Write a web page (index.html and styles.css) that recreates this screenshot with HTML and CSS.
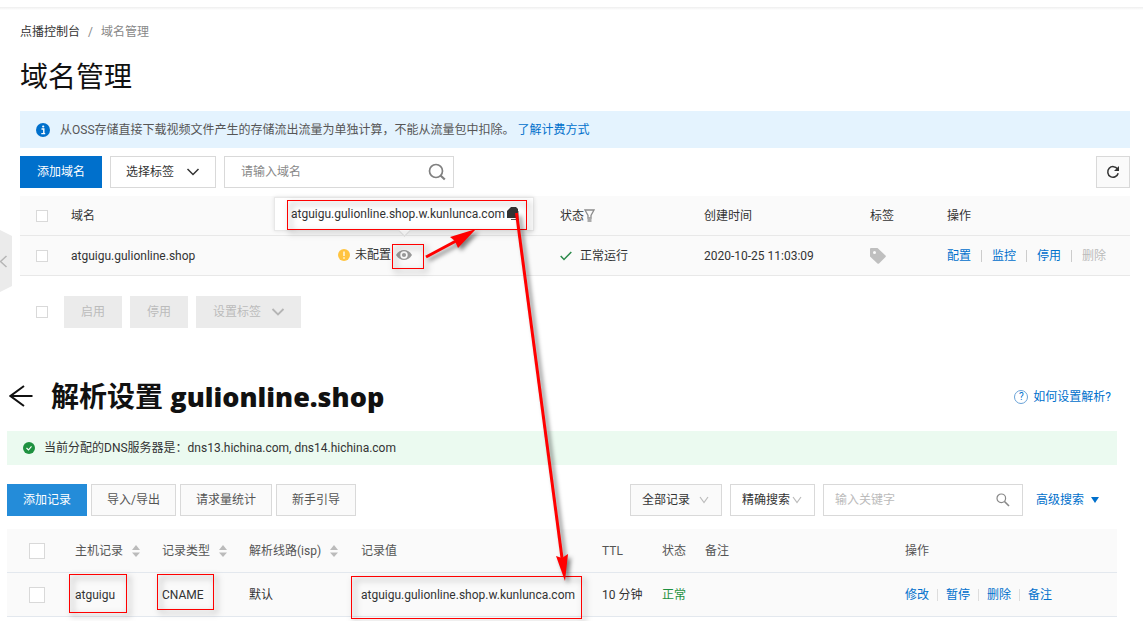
FILE: index.html
```html
<!DOCTYPE html>
<html lang="zh-CN">
<head>
<meta charset="utf-8">
<title>域名管理</title>
<link rel="stylesheet" href="styles.css">
</head>
<body>
<div class="topline"></div>
<button class="collapse" type="button" aria-label="收起菜单">
  <svg width="12" height="62" viewBox="0 0 12 62"><path d="M0 0L12 6V56L0 62Z" fill="#ebebeb"/><path d="M6.500 26L0.500 31.500L6.500 37" fill="none" stroke="#b5b5b5" stroke-width="1.500"/></svg>
</button>

<main>
<section class="domains">
  <nav class="crumbs"><a href="#">点播控制台</a><span class="slash">/</span><span>域名管理</span></nav>
  <h1 class="title">域名管理</h1>
  <div class="notice info">
    <svg width="14" height="14" viewBox="0 0 14 14"><circle cx="7" cy="7" r="7" fill="#0070cc"/><path d="M5.500 6H7.800V10.500M5.300 10.600H9.200" fill="none" stroke="#fff" stroke-width="1.400"/><circle cx="7.200" cy="3.500" r="1.100" fill="#fff"/></svg>
    <p>从OSS存储直接下载视频文件产生的存储流出流量为单独计算，不能从流量包中扣除。 <a href="#">了解计费方式</a></p>
  </div>
  <div class="toolbar">
    <button class="btn primary" type="button">添加域名</button>
    <div class="pick tag-pick">
      <select aria-label="选择标签"><option>选择标签</option></select>
      <svg width="14" height="8" viewBox="0 0 14 8"><path d="M1.500 1L7 6.500L12.500 1" fill="none" stroke="#333" stroke-width="1.500"/></svg>
    </div>
    <div class="search wide">
      <input type="text" placeholder="请输入域名" aria-label="请输入域名">
      <svg width="18" height="18" viewBox="0 0 18 18"><circle cx="8" cy="8" r="6.500" fill="none" stroke="#808080" stroke-width="1.700"/><path d="M12.500 12.500L16.800 16.500" stroke="#808080" stroke-width="2.200"/></svg>
    </div>
    <button class="btn refresh" type="button" aria-label="刷新">
      <svg width="14" height="14" viewBox="0 0 14 14"><path d="M11.500 4A5.300 5.300 0 1 0 12.200 8.300" fill="none" stroke="#333" stroke-width="1.500"/><path d="M13 1V6H8Z" fill="#333"/></svg>
    </button>
  </div>
  <table class="grid domain-grid">
    <colgroup><col class="d-check"><col class="d-name"><col class="d-cname"><col class="d-state"><col class="d-time"><col class="d-tag"><col></colgroup>
    <thead>
      <tr><th><input type="checkbox" aria-label="全选域名"></th><th>域名</th><th></th>
      <th><span class="cell">状态<svg width="11" height="13" viewBox="0 0 11 13"><path d="M1 1H10L7 6.500V9H4V6.500Z" fill="none" stroke="#8c8c8c" stroke-width="1.300"/><path d="M3.500 8.500H7.500V13H3.500Z" fill="#aaa"/></svg></span></th>
      <th>创建时间</th><th>标签</th><th>操作</th></tr>
    </thead>
    <tbody>
      <tr><td><input type="checkbox" aria-label="选择 atguigu.gulionline.shop"></td><td>atguigu.gulionline.shop</td>
      <td><span class="cell cname">
        <svg class="warn" width="12" height="12" viewBox="0 0 12 12"><circle cx="6" cy="6" r="6" fill="#ffc440"/><path d="M6 2.500V7M6 8.200V9.700" stroke="#fff" stroke-width="1.300"/></svg>未配置
        <span class="eye"><svg width="16" height="10" viewBox="0 0 16 10"><path d="M0 5C4-1.600 12-1.600 16 5C12 11.600 4 11.600 0 5Z" fill="#999"/><circle cx="8" cy="5" r="3.700" fill="#fafafa"/><circle cx="8" cy="5" r="2.100" fill="#999"/></svg>
          <span class="tip">atguigu.gulionline.shop.w.kunlunca.com
            <svg width="12" height="13" viewBox="0 0 12 13"><path d="M4 0H9L11 2V11H0V4Z" fill="#333"/><path d="M4 12.500H12V4" fill="none" stroke="#555"/></svg>
          </span>
        </span>
      </span></td>
      <td><span class="cell ok"><svg width="12" height="10" viewBox="0 0 12 10"><path d="M0.700 5L4 8.500L11.300 1" fill="none" stroke="#2c8a4b" stroke-width="1.500"/></svg>正常运行</span></td>
      <td>2020-10-25 11:03:09</td>
      <td><svg class="label" width="16" height="16" viewBox="0 0 16 16"><path fill-rule="evenodd" d="M0 1Q0 0 1 0H7.500L15.500 7.500Q16.200 8.200 15.500 9L9 15.500Q8.200 16.200 7.500 15.500L0 8.500ZM4.500 3A1.500 1.500 0 1 0 4.500 6A1.500 1.500 0 1 0 4.500 3Z" fill="#bfbfbf"/></svg></td>
      <td><div class="links roomy"><a href="#">配置</a><a href="#">监控</a><a href="#">停用</a><span class="off">删除</span></div></td></tr>
    </tbody>
  </table>
  <div class="batch">
    <input type="checkbox" aria-label="全选">
    <button class="btn muted" type="button" disabled>启用</button>
    <button class="btn muted" type="button" disabled>停用</button>
    <button class="btn muted" type="button" disabled>设置标签<svg width="14" height="8" viewBox="0 0 14 8"><path d="M1.500 1L7 6.500L12.500 1" fill="none" stroke="#b5b5b5" stroke-width="1.800"/></svg></button>
  </div>
</section>

<section class="dns">
  <header class="dns-head">
    <a href="#" class="back" aria-label="返回"><svg width="24" height="22" viewBox="0 0 24 22"><path d="M23.500 11H1.500M15 1L1.500 11L15 21" fill="none" stroke="#111" stroke-width="2"/></svg></a>
    <h2>解析设置 <b>gulionline.shop</b></h2>
    <a href="#" class="help"><span class="q">?</span>如何设置解析?</a>
  </header>
  <div class="notice good">
    <svg width="12" height="12" viewBox="0 0 12 12"><circle cx="6" cy="6" r="6" fill="#1e9140"/><path d="M3.500 6L5.500 8L8.500 4.300" fill="none" stroke="#fff" stroke-width="1.100"/></svg>
    <p>当前分配的DNS服务器是：dns13.hichina.com, dns14.hichina.com</p>
  </div>
  <div class="toolbar tight">
    <button class="btn blue" type="button">添加记录</button>
    <button class="btn plain" type="button">导入/导出</button>
    <button class="btn plain" type="button">请求量统计</button>
    <button class="btn plain" type="button">新手引导</button>
    <div class="filters">
      <div class="pick all-pick"><select aria-label="记录范围"><option>全部记录</option></select><svg width="10" height="8" viewBox="0 0 10 8"><path d="M1 1L5 6.500L9 1" fill="none" stroke="#bbb" stroke-width="1.200"/></svg></div>
      <div class="pick mode-pick"><select aria-label="搜索方式"><option>精确搜索</option></select><svg width="10" height="8" viewBox="0 0 10 8"><path d="M1 1L5 6.500L9 1" fill="none" stroke="#bbb" stroke-width="1.200"/></svg></div>
      <div class="search short">
        <input type="text" placeholder="输入关键字" aria-label="输入关键字">
        <svg width="14" height="14" viewBox="0 0 14 14"><circle cx="5.300" cy="5.300" r="4.300" fill="none" stroke="#888" stroke-width="1.200"/><path d="M8.500 8.500L13 13" stroke="#888" stroke-width="1.600"/></svg>
      </div>
      <a href="#" class="more">高级搜索<svg width="8" height="6" viewBox="0 0 8 6"><path d="M0 0H8L4 6Z" fill="#0070cc"/></svg></a>
    </div>
  </div>
  <table class="grid dns-grid">
    <colgroup><col class="r-check"><col class="r-host"><col class="r-host"><col class="r-line"><col class="r-value"><col class="r-ttl"><col class="r-state"><col class="r-note"><col></colgroup>
    <thead>
      <tr><th><input type="checkbox" aria-label="全选记录"></th>
      <th><span class="cell sort">主机记录<svg width="8" height="12" viewBox="0 0 8 12"><path d="M0 5L4 0L8 5ZM0 7.500H8L4 12Z" fill="#bbb"/></svg></span></th>
      <th><span class="cell sort">记录类型<svg width="8" height="12" viewBox="0 0 8 12"><path d="M0 5L4 0L8 5ZM0 7.500H8L4 12Z" fill="#bbb"/></svg></span></th>
      <th><span class="cell sort">解析线路(isp)<svg width="8" height="12" viewBox="0 0 8 12"><path d="M0 5L4 0L8 5ZM0 7.500H8L4 12Z" fill="#bbb"/></svg></span></th>
      <th>记录值</th><th>TTL</th><th>状态</th><th>备注</th><th>操作</th></tr>
    </thead>
    <tbody>
      <tr><td><input type="checkbox" aria-label="选择 atguigu"></td><td>atguigu</td><td>CNAME</td><td>默认</td><td>atguigu.gulionline.shop.w.kunlunca.com</td><td>10 分钟</td><td class="green">正常</td><td></td>
      <td><div class="links"><a href="#">修改</a><a href="#">暂停</a><a href="#">删除</a><a href="#">备注</a></div></td></tr>
    </tbody>
  </table>
</section>
</main>

<svg class="marks" width="1143" height="621" viewBox="0 0 1143 621" aria-hidden="true">
  <g class="frames">
    <rect x="287.500" y="200.500" width="239" height="29"/>
    <rect x="392.500" y="244.500" width="31" height="24"/>
    <rect x="69.500" y="574.500" width="57" height="38"/>
    <rect x="157.500" y="574.500" width="56" height="35"/>
    <rect x="351.500" y="576.500" width="230" height="42"/>
  </g>
  <g class="arrows">
    <path d="M426 257L456 241"/><path class="tiphead" d="M476 229L450 237L455 241L458 248Z"/>
    <path d="M516.500 213L562 558"/><path class="tiphead" d="M565 581L556 556L562 558L568 554Z"/>
  </g>
</svg>
</body>
</html>
```

FILE: styles.css
```css
* { box-sizing: border-box; }
body {
  position: relative;
  min-height: 100vh;
  margin: 0;
  background: #fff;
  color: #333;
  font: 12px/18px Roboto, "Noto Sans CJK SC", sans-serif;
}
a { color: #0070cc; text-decoration: none; }
svg { display: block; flex: none; }
h1, h2, p { margin: 0; }
button, input, select { font: inherit; color: inherit; }
main { overflow: hidden; }

.topline { height: 10px; border-top: 7px solid #fff; background: linear-gradient(#eee, #fff); }
.collapse { position: absolute; left: 0; top: 230px; padding: 0; border: 0; background: none; }

.domains { padding: 0 13px 0 20px; }
.crumbs { display: flex; padding-top: 13px; color: #888; }
.crumbs a { color: #333; }
.slash { margin: 0 8px; }
.title { margin: 17px 0 13px; font-size: 28px; line-height: 40px; font-weight: 400; color: #111; }

.notice { display: flex; align-items: center; }
.info { height: 37px; padding: 0 16px; gap: 10px; background: #e4f3fe; color: #555; }
.good { height: 34px; padding: 0 16px; gap: 9px; background: #ebfaf0; }

.toolbar { display: flex; gap: 8px; margin: 8px 0; }
.btn {
  display: flex; align-items: center; justify-content: center;
  height: 32px; padding: 0 15px;
  border: 1px solid #d9d9d9; background: #fafafa; white-space: nowrap;
}
.primary { width: 82px; border-color: #0070cc; background: #0070cc; color: #fff; }
.blue { border-color: #248cd9; background: #248cd9; color: #fff; }
.plain { color: #555; }
.refresh { width: 34px; margin-left: auto; padding: 0; }
.pick, .search { position: relative; height: 32px; border: 1px solid #d9d9d9; background: #fff; }
.pick select, .search input {
  width: 100%; height: 100%; padding: 0 15px;
  border: 0; border-radius: 0; outline: 0; background: none; appearance: none;
}
.pick svg, .search svg { position: absolute; top: 0; bottom: 0; margin: auto 0; pointer-events: none; }
.search input::placeholder { color: #888; opacity: 1; }
.tag-pick { width: 106px; }
.tag-pick svg { right: 15px; }
.wide { width: 230px; }
.wide svg { right: 7px; }
.wide input { padding-left: 16px; }

.grid { width: 100%; border-collapse: separate; border-spacing: 0; table-layout: fixed; background: #fafafa; }
.grid th, .grid td {
  height: 40px; padding: 0 0 0 16px;
  border-bottom: 1px solid #e8e8e8;
  text-align: left; font-weight: 400; white-space: nowrap;
}
input[type="checkbox"] {
  display: block; width: 12px; height: 12px; margin: 0; flex: none;
  border: 1px solid #d9d9d9; background: #fff; appearance: none;
}
.d-check { width: 35px; }
.d-name { width: 267px; }
.d-cname { width: 222px; }
.d-state { width: 144px; }
.d-time { width: 166px; }
.d-tag { width: 77px; }
.cell { display: flex; align-items: center; }
.cname { padding-bottom: 2px; }
.warn { margin-right: 5px; }
.eye { position: relative; margin-left: 5px; }
.ok { gap: 8px; }
.tip {
  position: absolute; right: -122px; bottom: 29px;
  display: flex; align-items: center; gap: 2px;
  width: 260px; height: 34px; padding-left: 16px;
  border: 1px solid #e8e8e8; background: #fff; box-shadow: 0 0 4px rgba(0, 0, 0, .1);
}
.tip::after {
  content: ""; position: absolute; left: 125px; bottom: -5px; width: 8px; height: 8px;
  border: solid #e0e0e0; border-width: 0 1px 1px 0; background: #fff; transform: rotate(45deg);
}
.links { display: flex; }
.links > * + * { display: flex; align-items: center; }
.links > * + *::before { content: ""; width: 1px; height: 12px; margin: 0 8px; background: #ddd; }
.roomy > * + *::before { margin: 0 10px; background: #ccc; }
.off { color: #bbb; }

.batch { display: flex; align-items: center; gap: 8px; margin-top: 20px; padding-left: 16px; }
.batch input { margin-right: 8px; }
.muted { padding: 0 17px; border: 0; background: #ebebeb; color: #bbb; }
.muted svg { margin: 0 -1px 0 10px; }

.dns { margin-top: 48px; padding: 0 26px 0 7px; }
.dns-head { display: flex; align-items: center; height: 40px; margin-bottom: 15px; padding: 0 6px 0 2px; }
.back { margin-right: 18px; }
.dns-head h2 { font-family: "Open Sans", "Noto Sans CJK SC", sans-serif; font-size: 28px; line-height: 40px; font-weight: 700; color: #111; }
.dns-head b { font-size: 27px; font-weight: 800; }
.help { display: flex; align-items: center; gap: 5px; margin-left: auto; padding-top: 2px; }
.q { width: 14px; height: 14px; border: 1px solid #6aa3d8; border-radius: 50%; font-size: 10px; line-height: 12px; text-align: center; }
.tight { gap: 4px; margin: 19px 0 13px; }
.filters { display: flex; align-items: center; gap: 8px; margin-left: auto; padding-right: 18px; }
.all-pick { width: 92px; background: #fafafa; }
.mode-pick { width: 85px; }
.filters select, .filters input { padding: 0 0 0 11px; }
.filters svg { right: 12px; }
.all-pick svg, .short svg { right: 12px; }
.short { width: 200px; }
.filters input::placeholder { color: #bbb; }
.more { display: flex; align-items: center; gap: 7px; margin-left: 5px; }

.dns-grid th, .dns-grid td { height: 44px; border-color: #e3e8ee; }
.dns-grid th { color: #555; }
.dns-grid th:first-child, .dns-grid td:first-child { padding-left: 22px; }
.dns-grid input { width: 16px; height: 16px; }
.r-check { width: 52px; }
.r-host { width: 87px; }
.r-line { width: 112px; }
.r-value { width: 241px; }
.r-ttl { width: 60px; }
.r-state { width: 43px; }
.r-note { width: 200px; }
.sort { gap: 9px; }
.dns-grid .green { color: #1e9140; }

.marks { position: absolute; left: 0; top: 0; pointer-events: none; }
.frames { fill: none; stroke: #f00; filter: drop-shadow(3px 3px 3px rgba(0, 0, 0, .55)); }
.arrows { fill: none; stroke: #f00; stroke-width: 3; filter: drop-shadow(3px 3px 2px rgba(0, 0, 0, .5)); }
.tiphead { fill: #f00; stroke: none; }
```
